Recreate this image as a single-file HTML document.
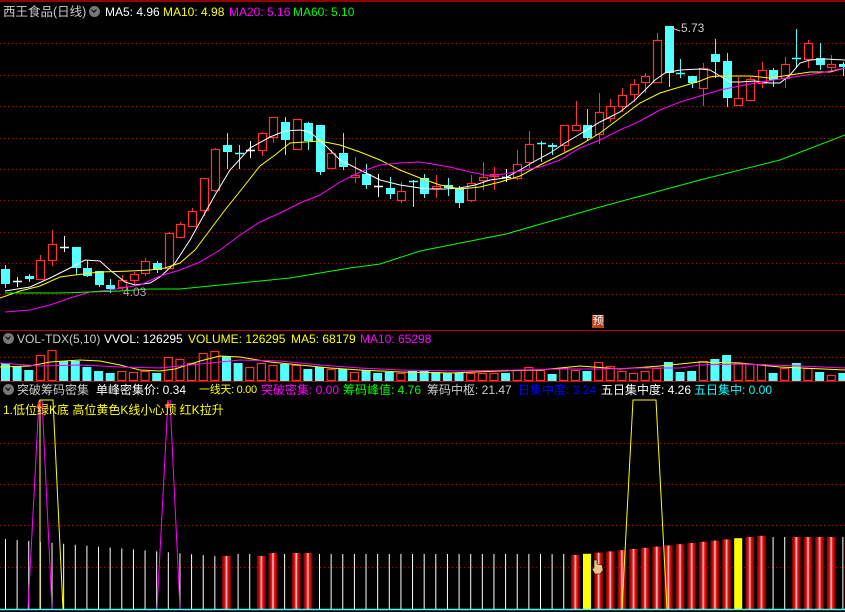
<!DOCTYPE html>
<html><head><meta charset="utf-8">
<style>
html,body{margin:0;padding:0;background:#000;width:845px;height:612px;overflow:hidden}
#w{position:relative;width:845px;height:612px}
svg{position:absolute;left:0;top:0}
.t{position:absolute;font:12px "Liberation Sans","Noto Sans CJK SC",sans-serif;white-space:nowrap;line-height:14px}
.ic{position:absolute;width:11px;height:11px;border-radius:50%;background:#777}
.ic:after{content:"";position:absolute;left:3px;top:2px;width:3px;height:3px;border-right:1.5px solid #000;border-bottom:1.5px solid #000;transform:rotate(45deg)}
</style></head><body><div id="w">
<svg id="s" width="845" height="612" xmlns="http://www.w3.org/2000/svg"></svg>
<div class="t" style="left:3px;top:5px;color:#ccc;font-size:12.5px">西王食品(日线)</div>
<div class="ic" style="left:89px;top:6px"></div>
<div class="t" style="left:105px;top:5px;color:#fff">MA5: 4.96</div>
<div class="t" style="left:163px;top:5px;color:#ff0">MA10: 4.98</div>
<div class="t" style="left:229px;top:5px;color:#f0f">MA20: 5.16</div>
<div class="t" style="left:293px;top:5px;color:#0f0">MA60: 5.10</div>
<div class="t" style="left:681px;top:21px;color:#ccc">5.73</div>
<div class="t" style="left:123px;top:285px;color:#aaa">4.03</div>
<div class="t" style="left:592px;top:315px;width:12px;height:13px;background:#b8401a;color:#fff;font-size:11px;line-height:13px;text-align:center">预</div>
<div class="ic" style="left:3px;top:333px"></div>
<div class="t" style="left:17px;top:332px;color:#ccc">VOL-TDX(5,10)</div>
<div class="t" style="left:104px;top:332px;color:#fff">VVOL: 126295</div>
<div class="t" style="left:188px;top:332px;color:#ff0">VOLUME: 126295</div>
<div class="t" style="left:291px;top:332px;color:#ff0">MA5: 68179</div>
<div class="t" style="left:360px;top:332px;color:#f0f">MA10: 65298</div>
<div class="ic" style="left:3px;top:384px"></div>
<div class="t" style="left:17px;top:383px;color:#ccc">突破筹码密集</div>
<div class="t" style="left:96px;top:383px;color:#fff">单峰密集价: 0.34</div>
<div class="t" style="left:199px;top:383px;color:#ff0;font-size:11px;letter-spacing:-0.3px">一线天: 0.00</div>
<div class="t" style="left:261px;top:383px;color:#f0f">突破密集: 0.00</div>
<div class="t" style="left:343px;top:383px;color:#0f0">筹码峰值: 4.76</div>
<div class="t" style="left:427px;top:383px;color:#ccc">筹码中枢: 21.47</div>
<div class="t" style="left:518px;top:383px;color:#00f">日集中度: 3.24</div>
<div class="t" style="left:601px;top:383px;color:#fff">五日集中度: 4.26</div>
<div class="t" style="left:694px;top:383px;color:#0ff">五日集中: 0.00</div>
<div class="t" style="left:3px;top:403px;color:#ff0">1.低位绿K底 高位黄色K线小心顶 红K拉升</div>
</div>
<script>
var s=document.getElementById('s'),h='';
h+='<defs><linearGradient id="rg" x1="0" x2="1"><stop offset="0" stop-color="#6a0000"/><stop offset=".35" stop-color="#f01010"/><stop offset=".5" stop-color="#ffd8d8"/><stop offset=".65" stop-color="#f01010"/><stop offset="1" stop-color="#6a0000"/></linearGradient></defs>';
function L(x1,y1,x2,y2,c,w,d){h+='<line x1="'+x1+'" y1="'+y1+'" x2="'+x2+'" y2="'+y2+'" stroke="'+c+'" stroke-width="'+(w||1)+'"'+(d?' stroke-dasharray="'+d+'"':'')+'/>';}
function P(pts,c){var a=[];for(var i=0;i<pts.length;i+=2)a.push(pts[i]+','+pts[i+1]);h+='<polyline points="'+a.join(' ')+'" fill="none" stroke="'+c+'" stroke-width="1"/>';}
L(0,1,845,1,'#c00000',1.5);
[43,75,106,138,169,200,232,263,294,357,443,484,525,567].forEach(function(y){L(0,y+.5,845,y+.5,'#a00000',1,'1,3');});
L(0,330.5,845,330.5,'#c00000');L(0,381.5,845,381.5,'#c00000');
var C=[[5,269,284,265,288,'c'],[17,281,281,277,287,'w'],[29,276,279,274,282,'c'],[40,260,279,255,279,'r'],[52,244,260,230,266,'r'],[64,247,247,236,252,'w'],[76,247,268,247,275,'c'],[87,268,276,260,277,'c'],[99,271,285,271,287,'c'],[110,285,289,279,293,'c'],[122,280,287,275,290,'r'],[134,274,280,272,284,'r'],[145,261,273,258,276,'r'],[157,263,270,261,273,'c'],[169,233,268,232,268,'r'],[180,224,237,222,238,'r'],[192,211,226,208,227,'r'],[204,178,210,178,216,'r'],[215,149,190,148,192,'r'],[227,145,152,133,169,'c'],[239,153,154,145,169,'c'],[250,150,150,141,158,'w'],[262,133,150,132,156,'r'],[273,117,137,117,143,'r'],[285,122,140,117,155,'c'],[297,119,149,119,150,'r'],[308,123,141,122,150,'c'],[320,125,172,125,175,'c'],[331,153,168,150,168,'r'],[343,153,167,133,170,'c'],[355,175,177,157,183,'r'],[366,174,185,164,189,'c'],[378,186,186,174,197,'w'],[390,188,194,177,199,'c'],[401,191,200,182,203,'r'],[413,181,182,180,207,'c'],[424,178,194,174,198,'c'],[436,186,188,175,198,'r'],[448,185,188,178,196,'c'],[459,188,203,186,208,'c'],[471,183,200,175,202,'r'],[483,177,180,162,190,'r'],[494,174,176,167,190,'r'],[506,177,177,169,182,'w'],[517,164,178,150,180,'r'],[529,144,162,131,168,'r'],[541,143,143,141,162,'c'],[552,145,147,143,155,'c'],[564,125,145,125,152,'r'],[576,125,130,101,130,'r'],[587,125,138,109,141,'c'],[599,112,134,93,144,'r'],[610,106,118,99,122,'r'],[622,95,106,88,112,'r'],[634,84,94,79,102,'r'],[645,76,82,73,93,'r'],[657,40,82,33,82,'r'],[669,26,73,26,87,'c'],[680,73,74,59,78,'c'],[692,76,83,76,88,'c'],[703,68,88,63,106,'r'],[715,54,62,39,78,'c'],[727,61,98,53,107,'c'],[738,98,105,77,105,'r'],[750,79,100,77,100,'r'],[762,70,83,62,88,'r'],[773,70,80,68,87,'c'],[785,64,78,57,88,'r'],[796,58,58,29,68,'c'],[808,43,59,40,68,'r'],[820,58,65,43,70,'c'],[831,64,67,55,72,'r'],[843,64,67,62,76,'c']];
C.forEach(function(c){var x=c[0],col=c[5]=='r'?'#ff3232':c[5]=='c'?'#54ffff':'#fff';
L(x+.5,c[3],x+.5,c[4],col);
if(c[5]=='r'){h+='<rect x="'+(x-3.5)+'" y="'+(c[1]+.5)+'" width="8" height="'+Math.max(1,c[2]-c[1])+'" fill="#000" stroke="'+col+'" stroke-width="1.2"/>';}
else if(c[2]-c[1]<2){L(x-4,c[1]+.5,x+5,c[1]+.5,col,1.5);}
else h+='<rect x="'+(x-4)+'" y="'+c[1]+'" width="9" height="'+(c[2]-c[1])+'" fill="'+col+'"/>';});
P([5,291,30,287,50,278,70,268,85,260,100,261,110,270,125,282,135,285,150,283,160,277,175,263,190,240,200,222,215,195,230,170,250,148,270,137,285,131,300,130,310,132,325,145,340,160,360,170,380,180,400,185,420,188,430,189,445,189,460,188,475,185,490,180,505,178,520,170,535,161,550,153,565,143,580,134,600,122,620,112,635,100,645,90,655,80,665,73,680,70,700,69,710,70,720,76,730,82,740,82,755,81,770,83,780,83,790,75,800,63,810,60,825,59,845,60],'#fff');
P([0,298,20,291,40,286,60,277,75,275,100,272,130,271,150,270,165,268,180,263,195,250,210,230,225,210,245,185,260,166,275,155,290,143,305,142,320,141,340,145,360,152,380,160,400,170,420,178,440,185,460,189,480,187,500,182,520,176,540,165,560,155,580,145,600,133,620,118,640,103,660,93,680,87,700,81,710,77,720,76,750,76,770,78,790,75,810,72,830,72,845,68],'#ff0');
P([5,312,30,310,50,305,70,298,90,292,110,290,140,285,160,276,180,270,200,262,220,250,240,235,260,222,280,213,300,203,320,195,340,182,360,172,380,165,400,163,420,162,450,167,470,172,490,176,510,173,540,167,560,160,580,148,600,140,620,130,640,121,660,110,680,102,700,96,720,90,740,86,760,82,780,79,800,76,820,73,845,68],'#f0f');
P([5,293,60,293,90,292,120,291,150,289,180,289,200,287,230,284,260,281,290,278,320,273,350,268,380,264,420,251,506,234,600,207,700,180,780,160,845,135],'#0f0');
L(672,28,680,31,'#ccc');
var V=[363,'c',366,'c',370,'c',355,'r',350,'r',361,'c',361,'c',367,'c',371,'c',373,'c',371,'r',372,'r',371,'r',373,'c',357,'r',359,'r',363,'r',353,'r',351,'r',356,'c',363,'c',367,'r',363,'r',365,'r',364,'c',365,'r',369,'c',367,'c',369,'r',369,'c',372,'r',370,'c',373,'c',372,'c',373,'r',371,'c',371,'c',372,'c',373,'c',373,'c',373,'r',373,'r',373,'r',373,'c',370,'r',367,'r',370,'r',374,'c',368,'r',370,'r',371,'c',362,'r',366,'r',371,'r',373,'r',371,'r',368,'r',362,'c',372,'c',371,'c',361,'r',359,'c',355,'c',363,'r',364,'r',364,'r',373,'c',368,'r',363,'c',368,'r',372,'c',375,'r',373,'c'];
for(var i=0;i<73;i++){var x=5+11.63*i,t=V[2*i],k=V[2*i+1];
if(k=='r')h+='<rect x="'+(x-3.5)+'" y="'+(t+.5)+'" width="8" height="'+(380-t)+'" fill="none" stroke="#ff3232" stroke-width="1.2"/>';
else h+='<rect x="'+(x-4)+'" y="'+t+'" width="9" height="'+(381-t)+'" fill="#54ffff"/>';}
P([0,367,30,366,50,362,80,360,100,361,120,365,140,370,160,371,175,369,200,361,220,356,240,357,270,362,300,365,330,368,360,370,400,372,450,373,500,371,540,370,580,366,620,369,660,366,700,362,740,363,780,367,845,370],'#ff0');
P([0,363,40,366,80,365,120,367,160,368,200,364,240,360,280,361,320,365,360,368,400,370,460,371,520,370,560,369,600,369,640,368,680,368,700,365,740,364,800,366,845,368],'#f0f');
for(var i=0;i<73;i++){var x=5+11.63*i,t,k='w';
if(i<=18)t=539+i*0.95;else if(i<49)t=554;else t=555-(i-49)*1.2;
if(i>=66)t=537;
if([19,22,23,25,26].indexOf(i)>=0)k='r';
if(i>=49&&i<=65)k='r';if(i==50||i==63)k='y';if(i>=68&&i<=71)k='r';
if(i==19)t=556;if(i==22)t=556;if(i==23||i==25||i==26)t=553;
if(k=='w')L(x+.5,t,x+.5,609,'#fff');
else if(k=='y')h+='<rect x="'+(x-3.5)+'" y="'+t+'" width="8" height="'+(609-t)+'" fill="#ff0"/>';
else h+='<rect x="'+(x-4)+'" y="'+t+'" width="9" height="'+(609-t)+'" fill="url(#rg)"/>';}
P([28,609,39,400],'#f0f');P([42,400,52,609],'#f0f');P([40,609,40,400,53,400,63,609],'#ff0');
P([157,609,168,400],'#f0f');P([170,400,180,609],'#f0f');
P([622,609,633,400,656,400,667,609],'#ff0');
h+='<path d="M36,408 L39,400 L42,408 Z" fill="#f33"/><path d="M165,408 L168,400 L171,408 Z" fill="#f33"/>';
L(0,609.5,845,609.5,'#4ff',1.5);
h+='<path d="M594,560 l3,0 0,4 5,1 1,5 -3,4 -5,0 -3,-5 2,-1 z" fill="#f0c080" stroke="#000" stroke-width=".5"/>';
s.innerHTML=h;
</script>
</body></html>
